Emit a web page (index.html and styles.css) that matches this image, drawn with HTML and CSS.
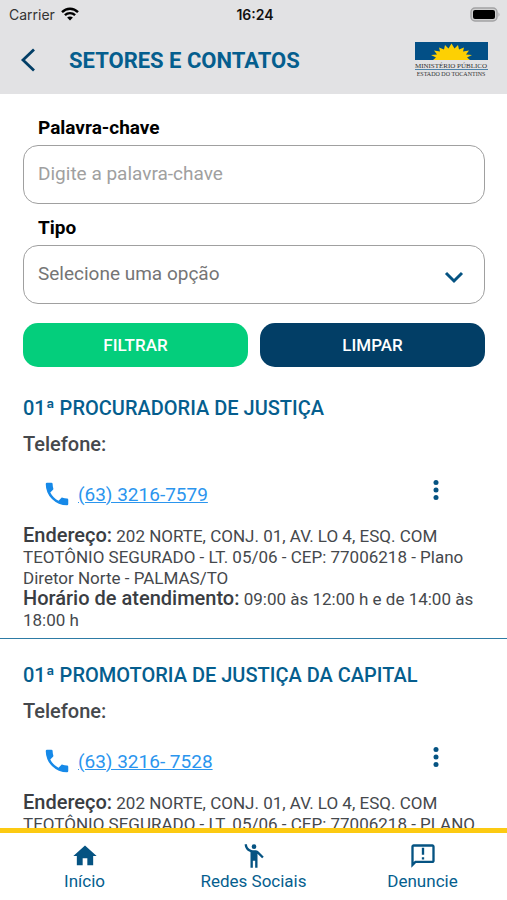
FILE: index.html
```html
<!DOCTYPE html>
<html lang="pt-br">
<head>
    <meta charset="UTF-8">
    <meta name="viewport" content="width=device-width, initial-scale=1.0">
    <title>Setores e Contatos</title>
    <link rel="stylesheet" href="styles.css">
</head>
<body>
    <header class="topo">
        <div class="status">
            <div class="operadora">
                <span>Carrier</span>
                <svg width="18" height="14" viewBox="0 0 18 14" fill="none" stroke="#000" stroke-width="2.4">
                    <path d="M1 5.2C5.6 .6 12.4 .6 17 5.2"/>
                    <path d="M3.9 8.2C6.8 5.4 11.2 5.4 14.1 8.2"/>
                    <path d="M9 13.6L6.1 10.6C7.7 9.1 10.3 9.1 11.9 10.6Z" fill="#000" stroke="none"/>
                </svg>
            </div>
            <span class="hora">16:24</span>
            <div class="bateria">
                <svg width="31" height="15" viewBox="0 0 31 15">
                    <rect x="1" y="1" width="26" height="13" rx="4" fill="#d0d0d1" stroke="#a2a2a4" stroke-width="1.4"/>
                    <rect x="3" y="3" width="22" height="9" rx="2" fill="#000"/>
                    <path d="M28.5 5.2Q30.5 7.5 28.5 9.8Z" fill="#a2a2a4"/>
                </svg>
            </div>
        </div>
        <div class="barra">
            <button class="voltar" type="button" aria-label="Voltar">
                <svg width="16" height="24" viewBox="0 0 16 24" fill="none" stroke="#023e66" stroke-width="2.8">
                    <path d="M14 1.5L3 12L14 22.5"/>
                </svg>
            </button>
            <h1>SETORES E CONTATOS</h1>
            <svg class="logo" width="76" height="36" viewBox="0 0 76 36" role="img" aria-label="Ministério Público">
                <rect x="1" y="0" width="73" height="18" fill="#024f86"/>
                <path fill="#fdd003" d="M19 18L22 15.600L17 13L23 12.500L20 8.500L26 9.500L25 5.500L30 7.500L31 3L34.500 6.500L37.500 1.500L40.500 6.500L44 3L45 7.500L50 5.500L49 9.500L55 8.500L52 12.500L58 13L53 15.600L56 18Z"/>
                <text x="37" y="26">MINISTÉRIO PÚBLICO</text>
                <rect x="1" y="27" width="73" height="1" fill="#4d84aa"/>
                <text class="estado" x="37" y="34">ESTADO DO TOCANTINS</text>
            </svg>
        </div>
    </header>

    <main class="conteudo">
        <form class="filtro">
            <label for="palavra">Palavra-chave</label>
            <input type="text" id="palavra" placeholder="Digite a palavra-chave">

            <label for="tipo">Tipo</label>
            <div class="campo-select">
                <select id="tipo">
                    <option value="">Selecione uma opção</option>
                </select>
                <svg class="seta" width="20" height="13" viewBox="0 0 20 13" fill="none" stroke="#055382" stroke-width="3">
                    <path d="M2 2L10 10L18 2"/>
                </svg>
            </div>

            <div class="botoes">
                <button class="filtrar" type="submit">FILTRAR</button>
                <button class="limpar" type="reset">LIMPAR</button>
            </div>
        </form>

        <section class="setor">
            <h2>01ª PROCURADORIA DE JUSTIÇA</h2>
            <h3>Telefone:</h3>
            <div class="telefone">
                <svg width="30" height="30" viewBox="0 0 24 24" fill="#1689e8">
                    <path d="M6.620 10.790C8.060 13.620 10.380 15.940 13.210 17.380L15.410 15.180C15.690 14.900 16.080 14.820 16.430 14.930C17.550 15.300 18.750 15.500 20 15.500A1 1 0 0 1 21 16.500V20A1 1 0 0 1 20 21A17 17 0 0 1 3 4A1 1 0 0 1 4 3H7.500A1 1 0 0 1 8.500 4C8.500 5.250 8.700 6.450 9.070 7.570C9.180 7.920 9.100 8.310 8.820 8.590L6.620 10.790Z"/>
                </svg>
                <a href="tel:6332167579">(63) 3216-7579</a>
                <button class="mais" type="button" aria-label="Mais opções">
                    <svg width="30" height="30" viewBox="0 0 24 24" fill="#055382">
                        <circle cx="12" cy="6" r="2"/>
                        <circle cx="12" cy="12" r="2"/>
                        <circle cx="12" cy="18" r="2"/>
                    </svg>
                </button>
            </div>
            <p><strong>Endereço:</strong> 202 NORTE, CONJ. 01, AV. LO 4, ESQ. COM TEOTÔNIO SEGURADO - LT. 05/06 - CEP: 77006218 - Plano Diretor Norte - PALMAS/TO</p>
            <p><strong>Horário de atendimento:</strong> 09:00 às 12:00 h e de 14:00 às 18:00 h</p>
        </section>

        <section class="setor">
            <h2>01ª PROMOTORIA DE JUSTIÇA DA CAPITAL</h2>
            <h3>Telefone:</h3>
            <div class="telefone">
                <svg width="30" height="30" viewBox="0 0 24 24" fill="#1689e8">
                    <path d="M6.620 10.790C8.060 13.620 10.380 15.940 13.210 17.380L15.410 15.180C15.690 14.900 16.080 14.820 16.430 14.930C17.550 15.300 18.750 15.500 20 15.500A1 1 0 0 1 21 16.500V20A1 1 0 0 1 20 21A17 17 0 0 1 3 4A1 1 0 0 1 4 3H7.500A1 1 0 0 1 8.500 4C8.500 5.250 8.700 6.450 9.070 7.570C9.180 7.920 9.100 8.310 8.820 8.590L6.620 10.790Z"/>
                </svg>
                <a href="tel:6332167528">(63) 3216- 7528</a>
                <button class="mais" type="button" aria-label="Mais opções">
                    <svg width="30" height="30" viewBox="0 0 24 24" fill="#055382">
                        <circle cx="12" cy="6" r="2"/>
                        <circle cx="12" cy="12" r="2"/>
                        <circle cx="12" cy="18" r="2"/>
                    </svg>
                </button>
            </div>
            <p><strong>Endereço:</strong> 202 NORTE, CONJ. 01, AV. LO 4, ESQ. COM TEOTÔNIO SEGURADO - LT. 05/06 - CEP: 77006218 - PLANO</p>
        </section>
    </main>

    <nav class="menu">
        <a href="#inicio">
            <svg width="28" height="28" viewBox="0 0 24 24" fill="#055382">
                <path d="M10 20V14H14V20H19V12H22L12 3L2 12H5V20H10Z"/>
            </svg>
            Início
        </a>
        <a href="#redes">
            <svg width="28" height="28" viewBox="0 0 24 24" fill="#055382">
                <circle cx="12" cy="4" r="2"/>
                <path d="M15.890 8.110C15.500 7.720 14.830 7 13.530 7H10.990C8.240 6.990 6 4.750 6 2H4C4 5.160 6.110 7.840 9 8.710V22H11V16H13V22H15V10.050L18.950 14L20.360 12.590L15.890 8.110Z"/>
            </svg>
            Redes Sociais
        </a>
        <a href="#denuncie">
            <svg width="28" height="28" viewBox="0 0 24 24" fill="#055382">
                <path d="M20 2H4C2.900 2 2 2.900 2 4V22L6 18H20C21.100 18 22 17.100 22 16V4C22 2.900 21.100 2 20 2ZM20 16H5.170L4 17.170V4H20V16ZM11 5H13V11H11ZM11 13H13V15H11Z"/>
            </svg>
            Denuncie
        </a>
    </nav>
</body>
</html>
```
FILE: styles.css
```css
* {
    box-sizing: border-box;
}
body {
    display: flex;
    flex-direction: column;
    height: 100vh;
    margin: 0;
    font-family: Roboto, "Liberation Sans", sans-serif;
    background-color: #fff;
    color: #45484c;
}
h1, h2, h3, p {
    margin: 0;
}
svg {
    display: block;
    flex-shrink: 0;
}
button {
    border: none;
    padding: 0;
    font-family: inherit;
    cursor: pointer;
}
.topo {
    flex-shrink: 0;
    background-color: #e2e2e4;
}
.status {
    display: grid;
    grid-template-columns: 1fr auto 1fr;
    align-items: center;
    height: 28px;
    padding: 0 6px 0 9px;
    font-family: Inter, sans-serif;
    font-size: 14px;
    color: #333;
}
.operadora {
    display: flex;
    align-items: center;
    gap: 6px;
}
.hora {
    font-weight: 600;
    color: #111;
}
.bateria {
    display: flex;
    justify-content: flex-end;
}
.barra {
    display: flex;
    align-items: center;
    height: 66px;
    padding: 0 17px 2px 20px;
}
.voltar {
    width: 49px;
    background: none;
}
h1 {
    flex: 1;
    font-size: 22px;
    font-weight: bold;
    color: #055e8e;
}
.logo text {
    font-family: "Liberation Serif", serif;
    font-size: 7px;
    text-anchor: middle;
    fill: #333;
}
.logo .estado {
    font-size: 6px;
}
.conteudo {
    flex: 1;
    min-height: 0;
    overflow: hidden;
}
.filtro {
    padding: 21px 22px 5px 23px;
}
label {
    display: block;
    margin-bottom: 4px;
    padding-left: 15px;
    font-size: 19px;
    line-height: 26px;
    font-weight: bold;
    color: #000;
}
input, select {
    display: block;
    width: 100%;
    height: 59px;
    margin-bottom: 11px;
    padding: 0 14px 2px;
    border: 1px solid #a0a0a0;
    border-radius: 15px;
    background-color: #fff;
    font-family: inherit;
    font-size: 19px;
    color: #757575;
}
input::placeholder {
    color: #a0a0a0;
}
select {
    appearance: none;
}
.campo-select {
    position: relative;
}
.seta {
    position: absolute;
    top: 26px;
    right: 21px;
    pointer-events: none;
}
.botoes {
    display: flex;
    gap: 12px;
    margin-top: 19px;
}
.botoes button {
    flex: 1;
    height: 44px;
    border-radius: 15px;
    font-size: 17px;
    font-weight: 500;
    color: #fff;
}
.filtrar {
    background-color: #04ce7c;
}
.limpar {
    background-color: #023e66;
}
.setor {
    padding: 24px 22px 7px 23px;
    border-bottom: 1px solid #2d7ba5;
}
h2, h3 {
    font-size: 20px;
    line-height: 24px;
    font-weight: 500;
}
h2 {
    margin-bottom: 12px;
    color: #055e8e;
}
.telefone {
    display: flex;
    align-items: center;
    gap: 6px;
    padding: 19px 34px 13px 19px;
}
.telefone a {
    flex: 1;
    font-size: 19px;
    color: #2b95ee;
}
.mais {
    padding-bottom: 8px;
    background: none;
}
p {
    font-size: 17px;
    line-height: 21px;
}
p strong {
    font-size: 20px;
    line-height: 18px;
    font-weight: 500;
    color: #3a3d42;
}
.menu {
    display: flex;
    flex-shrink: 0;
    height: 72px;
    border-top: 5px solid #fcca12;
    background-color: #fff;
}
.menu a {
    flex: 1;
    display: flex;
    flex-direction: column;
    align-items: center;
    padding-top: 9px;
    font-size: 17px;
    line-height: 22px;
    color: #055e8e;
    text-decoration: none;
}
```
